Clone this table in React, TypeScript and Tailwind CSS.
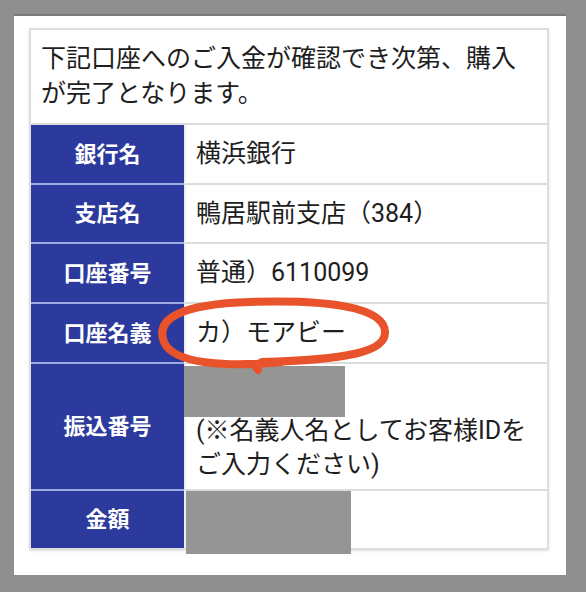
const FONT = { fontFamily: "Roboto, 'Noto Sans CJK JP', sans-serif" };

function Row({
  label,
  children,
  h,
  last,
}: {
  label: string;
  children: React.ReactNode;
  h: string;
  last?: boolean;
}) {
  return (
    <div className={`flex ${h}`}>
      <div
        className={`w-[153px] shrink-0 flex items-center justify-center bg-[#2b3a9c] text-white font-bold text-[22px] ${
          last ? "" : "border-b-2 border-[#9fabe3]"
        }`}
      >
        {label}
      </div>
      <div
        className={`flex-1 flex items-center border-l-2 border-[#eeeeee] text-[25px] text-[#1e1e1e] ${
          last ? "" : "border-b-2 border-b-[#dcdcdc]"
        }`}
      >
        {children}
      </div>
    </div>
  );
}

export default function App() {
  return (
    <div
      className="relative w-[586px] h-[592px] bg-[#8f8f8f] pl-[14px] pr-[20px] pt-[14px] pb-[17px]"
      style={FONT}
    >
      <div className="h-full bg-white pl-[15px] pr-[17px] pt-[12px] border-t-2 border-[#7a7a7a]">
        <div className="border-2 border-[#dedede] shadow-sm">
          <div className="h-[95px] border-b-2 border-[#dcdcdc] px-[10px] pt-[11px] text-[25px] leading-[35px] text-[#1e1e1e]">
            下記口座へのご入金が確認でき次第、購入が完了となります。
          </div>
          <Row label="銀行名" h="h-[60px]">
            <span className="pl-[10px]">横浜銀行</span>
          </Row>
          <Row label="支店名" h="h-[59px]">
            <span className="pl-[10px]">鴨居駅前支店（384）</span>
          </Row>
          <Row label="口座番号" h="h-[60px]">
            <span className="pl-[10px]">普通）6110099</span>
          </Row>
          <Row label="口座名義" h="h-[60px]">
            <span className="pl-[10px]">カ）モアビー</span>
          </Row>
          <Row label="振込番号" h="h-[127px]">
            <div className="self-stretch pt-[2px] leading-[34px]">
              <div className="w-[161px] h-[51px] -ml-[2px] bg-[#959595]" />
              <div className="pl-[10px] -mt-[3px]">
                (※名義人名としてお客様IDを
                <br />
                ご入力ください)
              </div>
            </div>
          </Row>
          <Row label="金額" h="h-[57px]" last>
            <div className="self-start w-[165px] h-[63px] bg-[#959595]" />
          </Row>
        </div>
      </div>
      <svg
        className="absolute inset-0 pointer-events-none"
        width="586"
        height="592"
        viewBox="0 0 586 592"
      >
        <path
          d="M 282 362 C 230 367 174 365 164 342 C 155 319 180 304 250 302 C 330 299 385 308 385 332 C 386 352 345 360 262 362 C 257 364 255 367 258 370"
          fill="none"
          stroke="#e8532c"
          strokeWidth="8"
          strokeLinecap="round"
          strokeLinejoin="round"
        />
      </svg>
    </div>
  );
}
